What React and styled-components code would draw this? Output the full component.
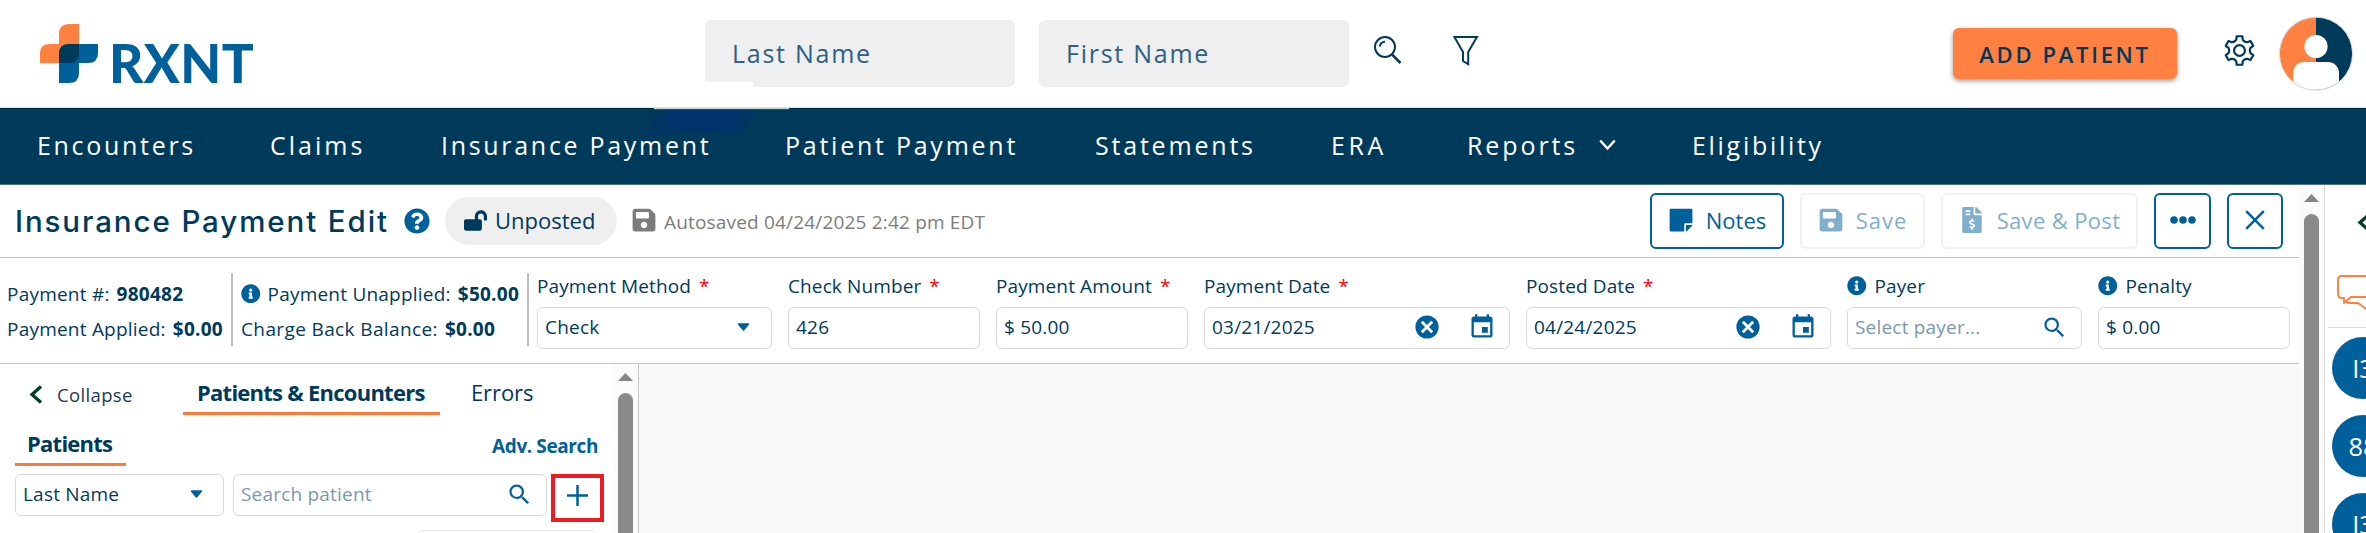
import React from 'react';
import styled, { createGlobalStyle } from 'styled-components';
import {
    FaStickyNote, FaSave, FaLockOpen, FaFileInvoiceDollar, FaQuestionCircle, FaInfoCircle,
} from 'react-icons/fa';
import { MdEvent, MdSearch } from 'react-icons/md';

// #003a5b navy
// #00609b blue
// #ff8040 orange

const GlobalStyle = createGlobalStyle`
    * { box-sizing: border-box; }
    body {
        margin: 0;
        overflow: hidden;
        background: #fff;
        color: #003a5b;
        font-family: 'Open Sans', 'Noto Sans', sans-serif;
    }
    svg { display: block; flex: none; }
`
const Page = styled.div`
    display: flex;
    flex-direction: column;
    width: 2366px;
    height: 533px;
    overflow: hidden;
`

/* ---------- header ---------- */
const Header = styled.header`
    position: relative;
    display: flex;
    align-items: center;
    flex: none;
    height: 108px;
    padding-right: 13px;
    border-bottom: 1px solid #dfe5e9;
`
const Logo = styled.div`
    display: flex;
    align-items: center;
    width: 705px;
    padding-left: 40px;
`
const LogoText = styled.span`
    margin: 18px 0 0 10px;
    font: 900 53px/60px 'Lato', sans-serif;
    letter-spacing: .4px;
    color: #00609b;
`
const NameInput = styled.div`
    width: 310px;
    height: 67px;
    margin-right: 24px;
    padding-left: 27px;
    border-radius: 6px;
    background: #efefef;
    color: #2c6184;
    font-size: 25px;
    line-height: 67px;
    letter-spacing: 1.75px;
`
const HeaderIcons = styled.div`
    display: flex;
    gap: 51px;
    margin: -6px auto 0 1px;
`
const AddPatient = styled.button`
    width: 224px;
    height: 51px;
    margin-right: 47px;
    padding: 0;
    border: 0;
    border-radius: 6px;
    background: #ff8040;
    box-shadow: 0 2px 5px rgba(0, 0, 0, .4);
    color: #003a5b;
    font: 600 22px 'Open Sans', sans-serif;
    letter-spacing: 2.7px;
`
const GearSlot = styled.div`
    margin: -7px 24px 0 0;
`
const InputPatch = styled.div`
    position: absolute;
    left: 705px;
    top: 82px;
    width: 48px;
    height: 6px;
    background: #fff;
`

/* ---------- nav ---------- */
const Nav = styled.nav`
    position: relative;
    display: flex;
    align-items: center;
    flex: none;
    height: 77px;
    padding: 0 0 3px 37px;
    background: #003a5b;
    border-top: 1px solid #002747;
    border-bottom: 1px solid #4c758c;
`
const NavItem = styled.a`
    position: relative;
    display: flex;
    align-items: center;
    gap: 21px;
    width: ${p => p.$w}px;
    color: #fff;
    font-size: 25px;
    letter-spacing: ${p => p.$ls || 2.7}px;
    white-space: nowrap;
`
const Smudge = styled.svg`
    position: absolute;
    left: 646px;
    top: -1px;
`

/* ---------- page ---------- */
const Body = styled.div`
    display: flex;
    flex: 1;
    min-height: 0;
`
const Main = styled.main`
    display: flex;
    flex-direction: column;
    width: 2299px;
    flex: none;
`
const TitleRow = styled.div`
    display: flex;
    align-items: center;
    flex: none;
    height: 73px;
    padding: 0 16px 0 15px;
    border-bottom: 1px solid #c6c6c6;
`
const Title = styled.h1`
    width: 389px;
    margin: 0 0 1px;
    font: 500 29.5px/40px 'Inter', sans-serif;
    letter-spacing: 1.9px;
    white-space: nowrap;
`
const HelpIcon = styled(FaQuestionCircle)`
    margin-bottom: 1px;
    color: #00609b;
`
const Pill = styled.div`
    display: flex;
    align-items: center;
    gap: 8px;
    width: 172px;
    height: 48px;
    margin: 0 15px 0 15px;
    padding: 0 0 2px 19px;
    border-radius: 24px;
    background: #efefef;
    font-size: 22px;
`
const Autosaved = styled.div`
    display: flex;
    align-items: center;
    gap: 7px;
    margin: 0 0 2px -1px;
    color: #7c7c7c;
    font-size: 19px;
    letter-spacing: .18px;
    span { margin-top: 4px; }
`
const Actions = styled.div`
    display: flex;
    gap: 16px;
    margin-left: auto;
`
const ActionButton = styled.button`
    display: flex;
    align-items: center;
    justify-content: center;
    gap: 12px;
    width: ${p => p.$w}px;
    height: 56px;
    padding: 0 0 2px;
    border: 2px solid ${p => (p.disabled ? '#eff2f4' : '#00609b')};
    border-radius: 6px;
    background: #fff;
    color: ${p => (p.disabled ? '#80afcd' : '#00609b')};
    font: 400 22px 'Open Sans', sans-serif;
    letter-spacing: ${p => p.$ls || 0}px;
`
const InfoRow = styled.div`
    display: flex;
    flex: none;
    height: 106px;
    padding-top: 15px;
    border-bottom: 1px solid #c6c6c6;
`
const Summary = styled.div`
    width: ${p => p.$w}px;
    height: 73px;
    padding: 2px 0 0 ${p => p.$pad}px;
    border-right: 2px solid #bdbdbd;
    font-size: 19px;
    letter-spacing: .22px;
    white-space: nowrap;
`
const SummaryLine = styled.div`
    display: flex;
    align-items: center;
    height: 35px;
    padding-top: 2px;
    letter-spacing: ${p => p.$ls || .22}px;
    b {
        margin-left: 7px;
        font-weight: 700;
        letter-spacing: .25px;
    }
    svg { margin-right: 7px; color: #00609b; }
`
const Fields = styled.div`
    display: grid;
    grid-template-columns: 235px 192px 192px 306px 305px 235px 192px;
    gap: 16px;
    margin-left: 8px;
`
const Label = styled.div`
    display: flex;
    align-items: center;
    height: 26px;
    margin-bottom: 8px;
    font-size: 19px;
    letter-spacing: .12px;
    i {
        margin-left: 8px;
        color: #f00;
        font-style: normal;
    }
    svg { margin-right: 8px; color: #00609b; }
`
const Box = styled.div`
    display: flex;
    align-items: center;
    width: ${p => (p.$w ? p.$w + 'px' : 'auto')};
    height: 42px;
    margin-left: ${p => p.$gap || 0}px;
    padding: 0 ${p => p.$end || 0}px 2px 7px;
    border: 1.5px solid #d9d9d9;
    border-radius: 6px;
    font-size: 19px;
    letter-spacing: .2px;
    color: ${p => (p.$placeholder ? '#7c98ab' : '#003a5b')};
    background: #fff;
`
const BoxIcons = styled.div`
    display: flex;
    align-items: center;
    gap: 29px;
    margin-left: auto;
    color: #00609b;
`

/* ---------- lower area ---------- */
const Lower = styled.div`
    display: flex;
    flex: 1;
    background: #f8f8f8;
`
const Side = styled.section`
    display: flex;
    width: 639px;
    border-right: 1px solid #c9c9c9;
    background: #fff;
    overflow: hidden;
`
const SideBody = styled.div`
    width: 613px;
    height: 169px;
    padding-left: 15px;
    overflow: hidden;
`
const TabRow = styled.div`
    display: flex;
    height: 51px;
`
const Tab = styled.div`
    height: 51px;
    width: ${p => p.$w}px;
    padding: 9px 0 0 ${p => p.$pad}px;
    border-bottom: ${p => (p.$active ? '3px solid #ff7a38' : '0')};
    font-size: 22px;
    line-height: 39px;
    font-weight: ${p => (p.$active ? 700 : 400)};
    letter-spacing: ${p => (p.$active ? -.75 : -.1)}px;
    white-space: nowrap;
`
const Collapse = styled.div`
    display: flex;
    align-items: center;
    gap: 14px;
    width: 168px;
    padding: 10px 0 0 14px;
    color: #1d3b53;
    font-size: 18.5px;
    letter-spacing: .35px;
`
const AdvSearch = styled.a`
    margin: 15px 15px 0 auto;
    color: #00609b;
    font-size: 19px;
    font-weight: 700;
    letter-spacing: -.4px;
    line-height: 32px;
`
const Controls = styled.div`
    display: flex;
    align-items: flex-start;
    margin-top: 8px;
`
const AddButton = styled.div`
    display: flex;
    align-items: center;
    justify-content: center;
    width: 53px;
    height: 48px;
    margin: 0 0 0 4px;
    padding-bottom: 5px;
    border: 4px solid #ed1c24;
`
const NextBox = styled.div`
    width: 180px;
    height: 30px;
    margin: 8px 0 0 402px;
    border: 1.5px solid #e3eaef;
    border-radius: 6px;
`

const Scroll = styled.div`
    display: flex;
    flex-direction: column;
    align-items: center;
    width: 25px;
    flex: none;
    padding: ${p => p.$top}px 1px 0 0;
    background: #fbfbfb;
`
const Thumb = styled.div`
    flex: 1;
    width: 15px;
    margin-top: 12px;
    border-radius: 8px 8px 0 0;
    background: #8a8a8a;
`
const Rail = styled.aside`
    width: 43px;
    flex: none;
    overflow: hidden;
    border-left: 1px solid #d6d6d6;
`
const RailTop = styled.div`
    height: 143px;
    margin-left: 3px;
    padding-top: 28px;
    border-bottom: 1.5px solid #dcdcdc;
    svg:first-child { margin-left: 29px; }
    svg:last-child { margin: 43px 0 0 9px; }
`
const Bubble = styled.div`
    width: 62px;
    height: 62px;
    margin: ${p => (p.$first ? 9 : 16)}px 0 0 7px;
    border-radius: 50%;
    background: #00609b;
    color: #fff;
    font: 400 25.5px/63px 'Open Sans', sans-serif;
    text-align: center;
`

const LogoMark = () => (
    <svg width="59" height="60" viewBox="0 0 59 60">
        <path d="M19 20V10Q19 0 29 0H39V39H0V29Q0 20 10 20Z" fill="#ff8040" />
        <path d="M19 59V30Q19 20 29 20H58V29Q58 39 48 39H39V49Q39 59 29 59Z" fill="#00609b" />
        <path d="M19 39V30Q19 20 29 20H39V29Q39 39 29 39Z" fill="#003a5b" />
    </svg>
)
const BigSearch = () => (
    <svg width="28" height="29" viewBox="0 0 28 29" fill="none" stroke="#003a5b" strokeWidth="2">
        <circle cx="11" cy="12" r="10" />
        <path d="M5.8 11.5A5.5 5.5 0 0 1 11 6.8" />
        <path d="M18.2 19.6L26.5 28" strokeWidth="2.6" />
    </svg>
)
const Funnel = () => (
    <svg width="26" height="31" viewBox="0 0 26 31" fill="none" stroke="#003a5b" strokeWidth="2">
        <path d="M1.4 2H24L15.2 17V29.2L10 26V17Z" />
    </svg>
)
// six flat teeth around a ring
const gearPoints = Array.from({ length: 6 }).flatMap((_, k) =>
    [[-25, 10.8], [-17, 11.6], [-11, 15], [11, 15], [17, 11.6], [25, 10.8]].map(([a, r]) => {
        const t = ((k * 60 + a - 90) * Math.PI) / 180;
        return `${(16 + r * Math.cos(t)).toFixed(2)},${(16.5 + r * Math.sin(t)).toFixed(2)}`;
    })
).join(' ');
const Gear = () => (
    <svg width="31" height="33" viewBox="0 0 32 33" fill="none" stroke="#003a5b" strokeWidth="2.3" strokeLinejoin="round">
        <polygon points={gearPoints} />
        <circle cx="16" cy="16.5" r="5.6" />
    </svg>
)
const Avatar = () => (
    <svg width="74" height="76" viewBox="0 0 74 76">
        <clipPath id="face"><circle cx="37" cy="37.5" r="36.3" /></clipPath>
        <g clipPath="url(#face)">
            <rect width="37" height="76" fill="#ff8040" />
            <rect x="37" width="37" height="76" fill="#003a5b" />
            <circle cx="37" cy="30.5" r="11.6" fill="#fff" />
            <rect x="14" y="46" width="46" height="40" rx="11" fill="#fff" />
        </g>
        <circle cx="37" cy="37.8" r="36.6" fill="none" stroke="#d3d9dd" strokeWidth=".9" />
    </svg>
)
const Caret = () => (
    <svg width="13" height="9" viewBox="0 0 13 9">
        <path d="M1.5 1H11.5L6.5 7Z" fill="#00609b" stroke="#00609b" strokeWidth="1.6" strokeLinejoin="round" />
    </svg>
)
const Clear = () => (
    <svg width="24" height="24" viewBox="0 0 24 24">
        <circle cx="12" cy="12" r="11.6" fill="#00609b" />
        <path d="M6.8 6.8L17.2 17.2M17.2 6.8L6.8 17.2" stroke="#fff" strokeWidth="2.8" />
    </svg>
)
const Chevron = () => (
    <svg width="14" height="19" viewBox="0 0 14 19" fill="none" stroke="#003c26" strokeWidth="3.3">
        <path d="M12 1.5L3 9.5L12 17.5" />
    </svg>
)
const Arrow = () => (
    <svg width="15" height="8" viewBox="0 0 15 8"><path d="M0 8L7.5 0L15 8Z" fill="#858585" /></svg>
)
const Chat = () => (
    <svg width="48" height="38" viewBox="0 0 48 38" fill="none" stroke="#ff8040" strokeWidth="1.9" strokeLinejoin="round">
        <path d="M5 1H31Q35 1 35 5V22H14L7 28V23H5Q1 23 1 19V5Q1 1 5 1Z" />
        <path d="M9 27L12 28H21L32 36V28H36" />
    </svg>
)

const DateField = ({ label, value }) => (
    <div>
        <Label>{label}<i>*</i></Label>
        <Box $end={13}>
            {value}
            <BoxIcons><Clear /><MdEvent size={28} /></BoxIcons>
        </Box>
    </div>
)

const App = () => (
    <Page>
        <GlobalStyle />
        <Header>
            <Logo><LogoMark /><LogoText>RXNT</LogoText></Logo>
            <NameInput>Last Name</NameInput>
            <NameInput>First Name</NameInput>
            <HeaderIcons><BigSearch /><Funnel /></HeaderIcons>
            <AddPatient>ADD PATIENT</AddPatient>
            <GearSlot><Gear /></GearSlot>
            <Avatar />
            <InputPatch />
        </Header>
        <Nav>
            <Smudge width="146" height="30" viewBox="0 0 146 30">
                <path d="M8 7L20 5V1H109L107 8L93 27L60 24L2 28Z" fill="#003563" />
                <path d="M22 2H94V20L88 22H30Q22 20 22 14Z" fill="#00336b" />
                <rect x="8" width="135" height="1.2" fill="#b9d0cf" />
            </Smudge>
            <NavItem $w={233}>Encounters</NavItem>
            <NavItem $w={171} $ls={3}>Claims</NavItem>
            <NavItem $w={344}>Insurance Payment</NavItem>
            <NavItem $w={310} $ls={2.75}>Patient Payment</NavItem>
            <NavItem $w={236} $ls={2.8}>Statements</NavItem>
            <NavItem $w={136} $ls={3.6}>ERA</NavItem>
            <NavItem $w={225} $ls={2.9}>
                Reports
                <svg width="17" height="12" viewBox="0 0 17 12" fill="none" stroke="#fff" strokeWidth="2.4">
                    <path d="M1.2 1.5L8.5 9.5L15.8 1.5" />
                </svg>
            </NavItem>
            <NavItem $w={140}>Eligibility</NavItem>
        </Nav>
        <Body>
            <Main>
                <TitleRow>
                    <Title>Insurance Payment Edit</Title>
                    <HelpIcon size={26} />
                    <Pill><FaLockOpen size={23} />Unposted</Pill>
                    <Autosaved>
                        <FaSave size={26} />
                        <span>Autosaved 04/24/2025 2:42 pm EDT</span>
                    </Autosaved>
                    <Actions>
                        <ActionButton $w={134}><FaStickyNote size={26} />Notes</ActionButton>
                        <ActionButton $w={125} $ls={1} disabled><FaSave size={26} />Save</ActionButton>
                        <ActionButton $w={197} $ls={.35} disabled><FaFileInvoiceDollar size={26} />Save &amp; Post</ActionButton>
                        <ActionButton $w={57}>
                            <svg width="26" height="8" viewBox="0 0 26 8" fill="#00609b">
                                <circle cx="4" cy="4" r="3.8" /><circle cx="13" cy="4" r="3.8" /><circle cx="22" cy="4" r="3.8" />
                            </svg>
                        </ActionButton>
                        <ActionButton $w={56}>
                            <svg width="20" height="20" viewBox="0 0 20 20" stroke="#00609b" strokeWidth="2.5">
                                <path d="M1.2 1.2L18.8 18.8M18.8 1.2L1.2 18.8" />
                            </svg>
                        </ActionButton>
                    </Actions>
                </TitleRow>
                <InfoRow>
                    <Summary $w={233} $pad={7}>
                        <SummaryLine>Payment #:<b>980482</b></SummaryLine>
                        <SummaryLine>Payment Applied:<b>$0.00</b></SummaryLine>
                    </Summary>
                    <Summary $w={296} $pad={8}>
                        <SummaryLine><FaInfoCircle size={19.5} />Payment Unapplied:<b>$50.00</b></SummaryLine>
                        <SummaryLine $ls={.38}>Charge Back Balance:<b>$0.00</b></SummaryLine>
                    </Summary>
                    <Fields>
                        <div>
                            <Label>Payment Method<i>*</i></Label>
                            <Box $end={21}>Check<BoxIcons><Caret /></BoxIcons></Box>
                        </div>
                        <div>
                            <Label>Check Number<i>*</i></Label>
                            <Box>426</Box>
                        </div>
                        <div>
                            <Label>Payment Amount<i>*</i></Label>
                            <Box>$ 50.00</Box>
                        </div>
                        <DateField label="Payment Date" value="03/21/2025" />
                        <DateField label="Posted Date" value="04/24/2025" />
                        <div>
                            <Label><FaInfoCircle size={19.5} />Payer</Label>
                            <Box $end={13} $placeholder>Select payer...<BoxIcons><MdSearch size={27} /></BoxIcons></Box>
                        </div>
                        <div>
                            <Label><FaInfoCircle size={19.5} />Penalty</Label>
                            <Box>$ 0.00</Box>
                        </div>
                    </Fields>
                </InfoRow>
                <Lower>
                    <Side>
                        <SideBody>
                            <TabRow>
                                <Collapse><Chevron />Collapse</Collapse>
                                <Tab $w={257} $pad={14} $active>Patients &amp; Encounters</Tab>
                                <Tab $w={120} $pad={31}>Errors</Tab>
                            </TabRow>
                            <TabRow>
                                <Tab $w={111} $pad={12} $active>Patients</Tab>
                                <AdvSearch>Adv. Search</AdvSearch>
                            </TabRow>
                            <Controls>
                                <Box $w={209} $end={20}>Last Name<BoxIcons><Caret /></BoxIcons></Box>
                                <Box $w={314} $gap={9} $end={13} $placeholder>
                                    Search patient<BoxIcons><MdSearch size={27} /></BoxIcons>
                                </Box>
                                <AddButton>
                                    <svg width="21" height="21" viewBox="0 0 21 21" stroke="#00609b" strokeWidth="2.5">
                                        <path d="M10.5 0V21M0 10.5H21" />
                                    </svg>
                                </AddButton>
                            </Controls>
                            <NextBox />
                        </SideBody>
                        <Scroll $top={9}><Arrow /><Thumb /></Scroll>
                    </Side>
                </Lower>
            </Main>
            <Scroll $top={9}><Arrow /><Thumb /></Scroll>
            <Rail>
                <RailTop>
                    <Chevron />
                    <Chat />
                </RailTop>
                <Bubble $first>I3</Bubble>
                <Bubble>88</Bubble>
                <Bubble>I3</Bubble>
            </Rail>
        </Body>
    </Page>
);

export default App;
